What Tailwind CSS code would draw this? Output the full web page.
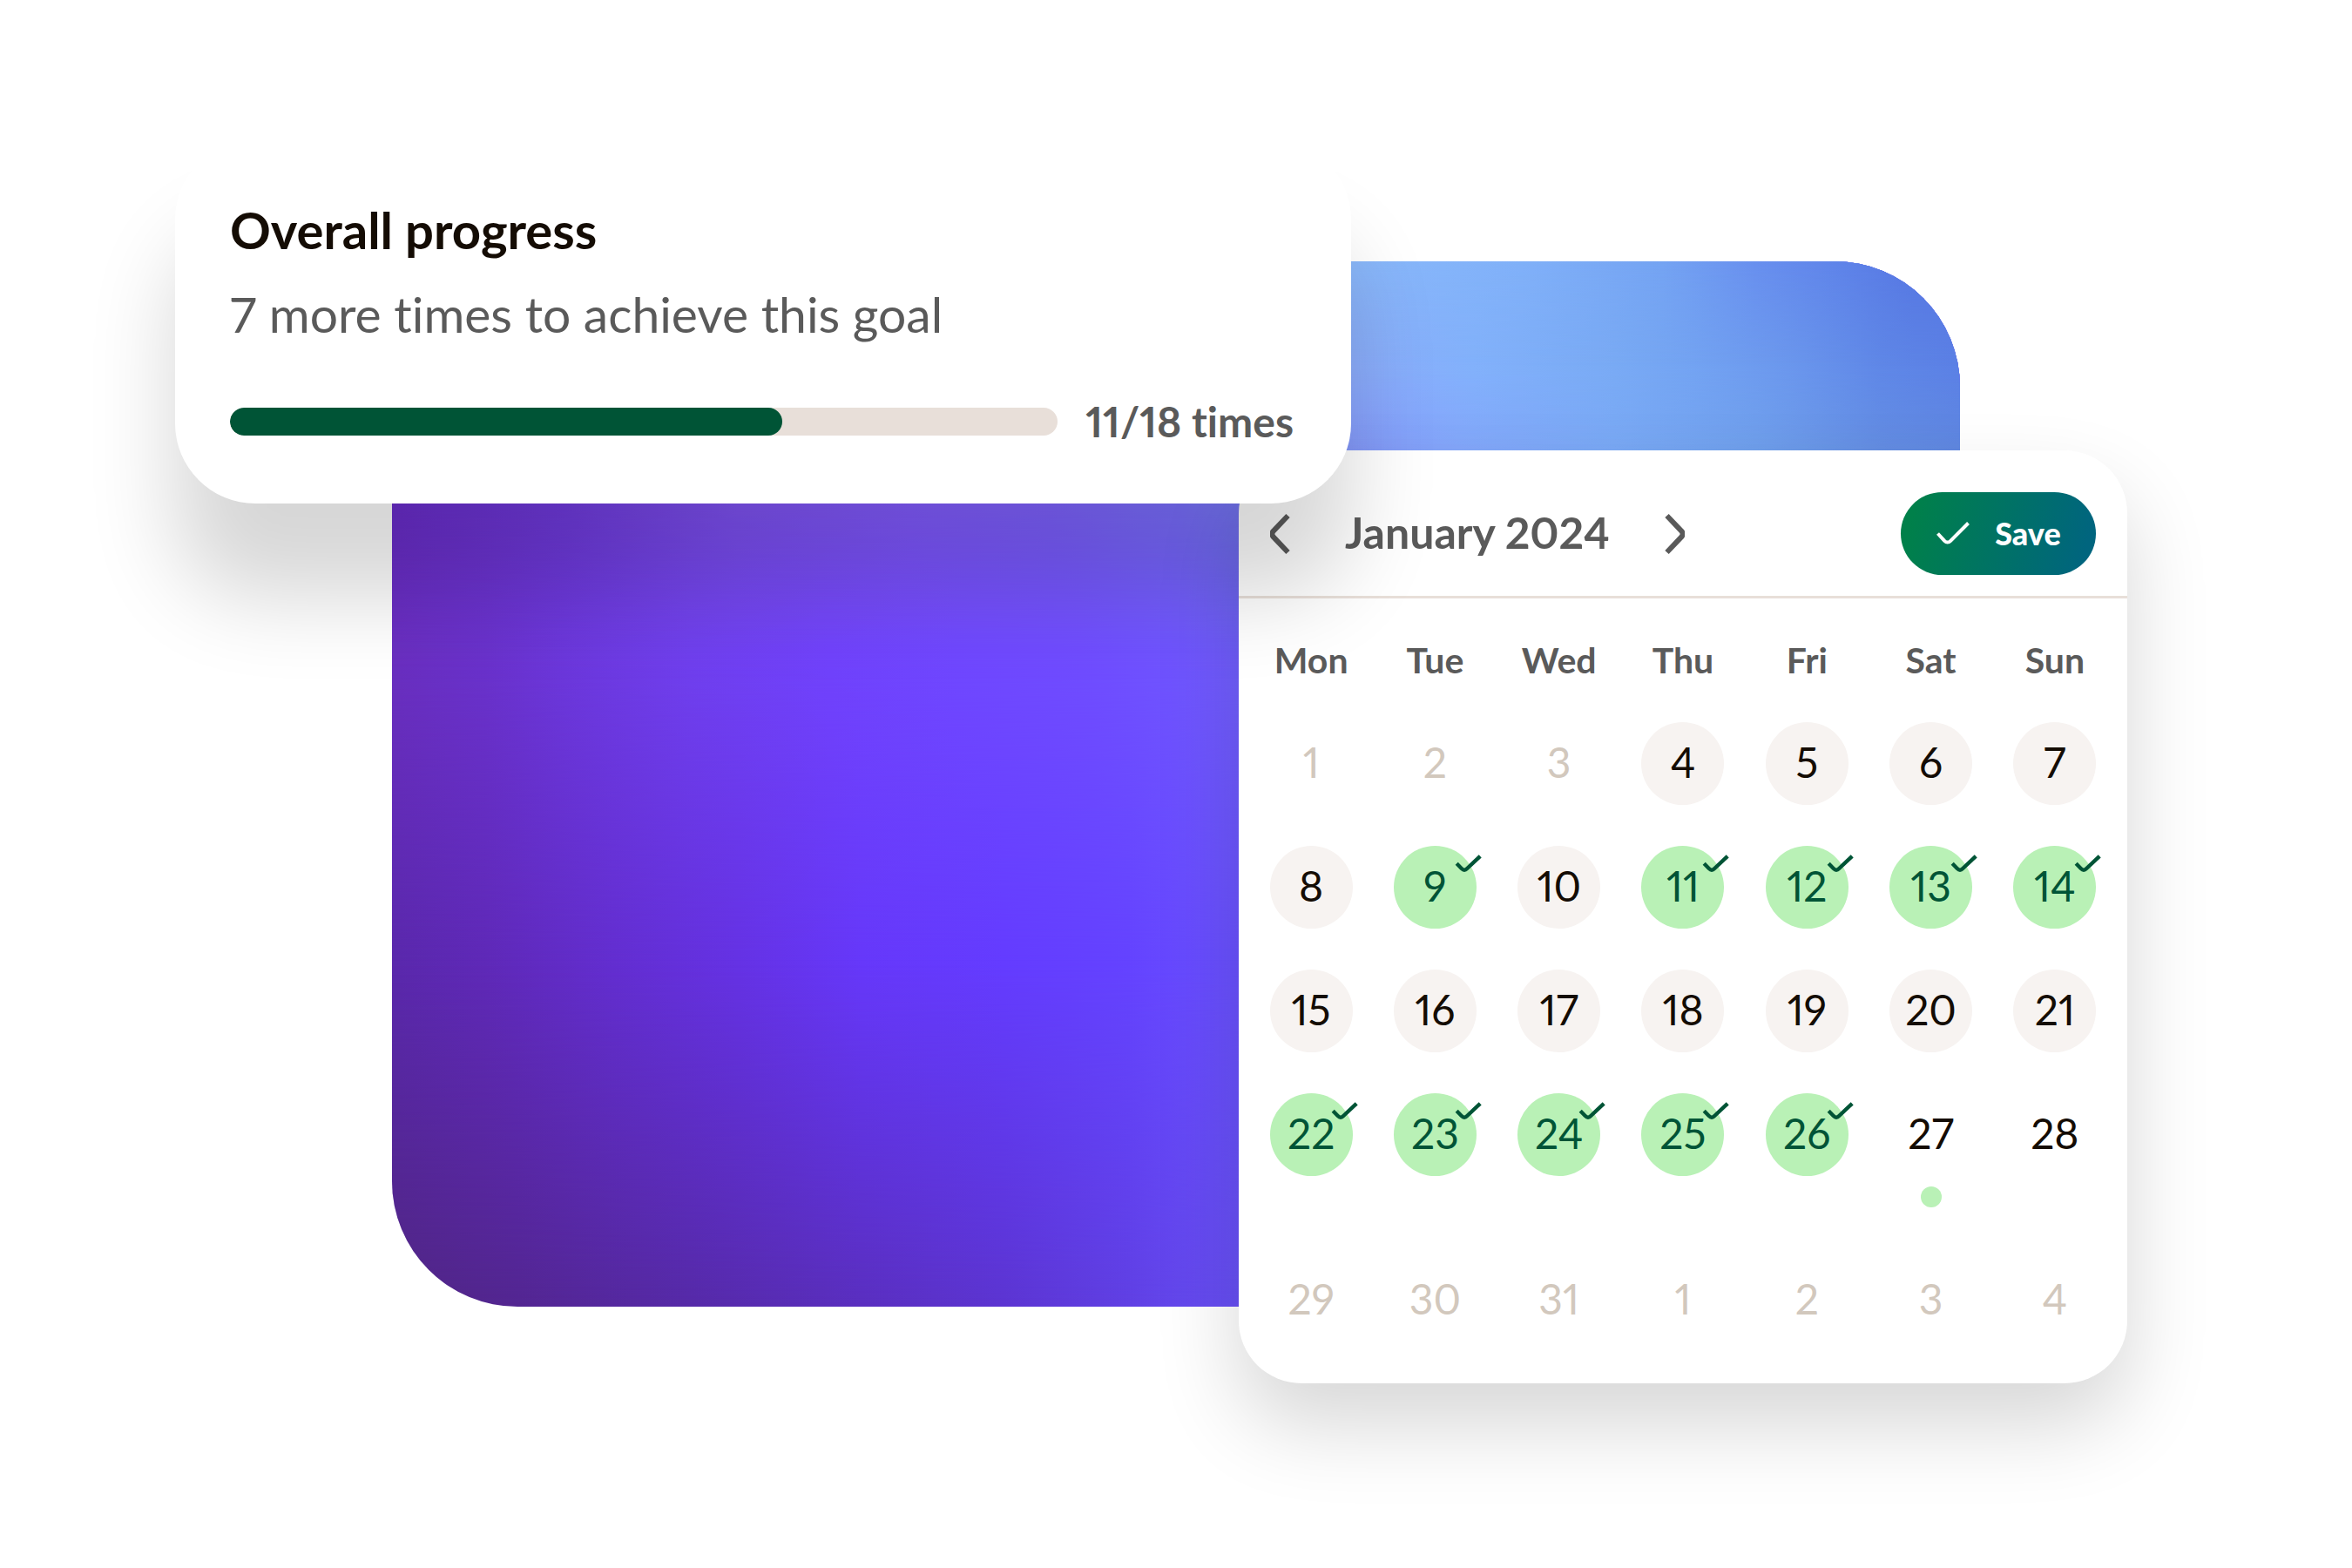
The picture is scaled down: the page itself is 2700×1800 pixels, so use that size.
<!DOCTYPE html>
<html lang="en">
<head>
<meta charset="utf-8">
<meta name="viewport" content="width=device-width, initial-scale=1">
<title>Goal progress</title>
<script src="https://cdn.jsdelivr.net/npm/@tailwindcss/browser@4"></script>
</head>
<body class="min-h-screen bg-white font-['Lato',sans-serif] text-[#140c04] proportional-nums [font-variant-ligatures:none]">
<svg class="hidden" aria-hidden="true">
  <symbol id="tick" viewBox="0 0 32 22"><path d="M2.2 10.3 L7.8 16 Q11 19.4 14.2 16 L29.2 1.8" fill="none" stroke="currentColor" stroke-width="4.4"/></symbol>
</svg>
<main class="grid grid-cols-[minmax(0,201fr)_minmax(0,249fr)_minmax(0,972fr)_minmax(0,129fr)_minmax(0,699fr)_minmax(0,192fr)_minmax(0,258fr)] items-start">

  <!-- Backdrop: horizontal colour bands, each fading into the one below it -->
  <div class="isolate col-start-3 col-end-6 row-start-1 mt-[300px] grid h-[1200px] overflow-hidden rounded-[144px] *:[grid-area:1/1]" aria-hidden="true">
    <div class="bg-[linear-gradient(90deg,#502684_0%,#532692_8%,#562aa8_19%,#5a2fc0_30%,#5c35d2_39%,#6040e4_47%,#6850f6_54%)]"></div>
    <div class="bg-[linear-gradient(90deg,#5a28ac_0%,#5f29b8_6%,#632ed0_14%,#6532e4_22%,#6638fa_30%,#643cff_39%,#6443ff_47%,#6a52ff_54%)] [mask-image:linear-gradient(#000_67%,transparent_100%)]"></div>
    <div class="bg-[linear-gradient(90deg,#6a2fc0_0%,#6a32cc_6%,#6c38dc_11%,#7040ee_19%,#7143fc_28%,#7048ff_36%,#704dff_44%,#7055ff_50%,#7260ff_54%)] [mask-image:linear-gradient(#000_37.5%,transparent_67%)]"></div>
    <div class="bg-[linear-gradient(90deg,#6b2dcf_0%,#723ce0_11%,#8256f3_22%,#8660ff_33%,#8167ff_42%,#7d75ff_50%,#7c80ff_54%,#8698ff_61%,#84a5fb_68%,#7aa9f6_78%,#70a1ec_87%,#658fe2_95%,#618ae0_100%)] [mask-image:linear-gradient(#000_21%,transparent_37.5%)]"></div>
    <div class="bg-[linear-gradient(90deg,#8cadfc_61%,#82b1fb_69%,#79aaf4_78%,#73a3f2_83%,#6b97ed_89%,#5f87e7_95%,#5b80e5_100%)] [mask-image:linear-gradient(#000_10%,transparent_20%)]"></div>
    <div class="bg-[linear-gradient(90deg,#8ab8fa_61%,#84b4f9_67%,#80b0f8_72%,#74a3f2_81%,#688fee_87%,#5f84e9_92%,#5677e2_97%)] [mask-image:linear-gradient(#000_0%,transparent_10%)]"></div>
  </div>

  <!-- Calendar -->
  <section class="isolate col-start-4 col-end-7 row-start-1 mt-[517px] rounded-[72px] bg-white shadow-[0_48px_96px_rgba(0,0,0,0.16)]" aria-label="Calendar">
    <header class="flex items-center justify-between border-b-3 border-[#e8dfd9] pt-12 pr-9 pb-6 pl-9 text-[#5a5a5a]">
      <div class="flex items-center gap-[60px]">
        <button type="button" aria-label="Previous month"><svg class="h-12 w-6" viewBox="0 0 24 48" fill="none" stroke="currentColor" stroke-width="6"><path d="M20.5 3 L3.8 20.6 Q0.8 24 3.8 27.4 L20.5 45"/></svg></button>
        <h2 class="min-w-[308px] pb-1 text-center text-[50px] leading-[56px] font-bold">January 2024</h2>
        <button type="button" aria-label="Next month"><svg class="h-12 w-6" viewBox="0 0 24 48" fill="none" stroke="currentColor" stroke-width="6"><path d="M3.5 3 L20.2 20.6 Q23.2 24 20.2 27.4 L3.5 45"/></svg></button>
      </div>
      <button type="button" class="flex h-[95px] w-[224px] items-center justify-center gap-7 rounded-full bg-[linear-gradient(105deg,#00804a_8%,#00657e_92%)] pb-0.5 text-[36px] leading-[48px] font-black text-white">
        <svg class="h-[28px] w-[40px]" viewBox="0 0 40 28" fill="none" stroke="currentColor" stroke-width="4"><path d="M2.5 14.5 L10.2 22.8 Q13.7 26.4 17.2 22.8 L37.5 2.5"/></svg>
        Save
      </button>
    </header>
    <div class="px-3 pb-12">
      <table class="w-full table-fixed border-collapse text-[48px] leading-[56px] [&_button]:relative [&_button]:mx-auto [&_button]:flex [&_button]:size-[95px] [&_button]:items-center [&_button]:justify-center [&_button]:rounded-full [&_button]:bg-[#f7f3f1] [&_button]:pb-1 [&_button:disabled]:bg-transparent [&_button:disabled]:text-[#d2c8bd] [&_button[aria-pressed]]:bg-[#b9f1b6] [&_button[aria-pressed]]:text-[#005436] [&_svg]:absolute [&_svg]:top-2.5 [&_svg]:left-[70px] [&_svg]:h-[22px] [&_svg]:w-8 [&_td]:p-0 [&_td]:pt-6 [&_td]:align-top">
        <thead class="text-[41px] leading-[48px] text-[#5a5a5a] [&_th]:p-0 [&_th]:pt-[47px] [&_th]:pb-[23px] [&_th]:font-bold">
          <tr><th scope="col">Mon</th><th scope="col">Tue</th><th scope="col">Wed</th><th scope="col">Thu</th><th scope="col">Fri</th><th scope="col">Sat</th><th scope="col">Sun</th></tr>
        </thead>
        <tbody>
          <tr class="h-[142px]">
            <td><button type="button" disabled>1</button></td>
            <td><button type="button" disabled>2</button></td>
            <td><button type="button" disabled>3</button></td>
            <td><button type="button">4</button></td>
            <td><button type="button">5</button></td>
            <td><button type="button">6</button></td>
            <td><button type="button">7</button></td>
          </tr>
          <tr class="h-[142px]">
            <td><button type="button">8</button></td>
            <td><button type="button" aria-pressed="true">9<svg aria-hidden="true"><use href="#tick"/></svg></button></td>
            <td><button type="button">10</button></td>
            <td><button type="button" aria-pressed="true">11<svg aria-hidden="true"><use href="#tick"/></svg></button></td>
            <td><button type="button" aria-pressed="true">12<svg aria-hidden="true"><use href="#tick"/></svg></button></td>
            <td><button type="button" aria-pressed="true">13<svg aria-hidden="true"><use href="#tick"/></svg></button></td>
            <td><button type="button" aria-pressed="true">14<svg aria-hidden="true"><use href="#tick"/></svg></button></td>
          </tr>
          <tr class="h-[142px]">
            <td><button type="button">15</button></td>
            <td><button type="button">16</button></td>
            <td><button type="button">17</button></td>
            <td><button type="button">18</button></td>
            <td><button type="button">19</button></td>
            <td><button type="button">20</button></td>
            <td><button type="button">21</button></td>
          </tr>
          <tr class="h-[190px]">
            <td><button type="button" aria-pressed="true">22<svg aria-hidden="true"><use href="#tick"/></svg></button></td>
            <td><button type="button" aria-pressed="true">23<svg aria-hidden="true"><use href="#tick"/></svg></button></td>
            <td><button type="button" aria-pressed="true">24<svg aria-hidden="true"><use href="#tick"/></svg></button></td>
            <td><button type="button" aria-pressed="true">25<svg aria-hidden="true"><use href="#tick"/></svg></button></td>
            <td><button type="button" aria-pressed="true">26<svg aria-hidden="true"><use href="#tick"/></svg></button></td>
            <td><button type="button" class="bg-transparent!" aria-current="date">27</button><span class="mx-auto mt-3 block size-6 rounded-full bg-[#b9f1b6]"></span></td>
            <td><button type="button" class="bg-transparent!">28</button></td>
          </tr>
          <tr>
            <td><button type="button" disabled>29</button></td>
            <td><button type="button" disabled>30</button></td>
            <td><button type="button" disabled>31</button></td>
            <td><button type="button" disabled>1</button></td>
            <td><button type="button" disabled>2</button></td>
            <td><button type="button" disabled>3</button></td>
            <td><button type="button" disabled>4</button></td>
          </tr>
        </tbody>
      </table>
    </div>
  </section>

  <!-- Progress -->
  <section class="isolate col-start-2 col-end-5 row-start-1 mt-40 rounded-[92px] bg-white pt-[68px] pr-[66px] pb-[66px] pl-[63px] shadow-[0_108px_100px_rgba(0,0,0,0.16)]">
    <h1 class="text-[58px] leading-[72px] font-bold" id="progress-title">Overall progress</h1>
    <p class="mt-6 text-[57px] leading-[72px] text-[#5a5a5a]">7 more times to achieve this goal</p>
    <div class="mt-[60px] flex items-center gap-8">
      <div class="h-8 flex-1 overflow-hidden rounded-full bg-[#e8dfd9]" role="progressbar" aria-labelledby="progress-title" aria-valuemin="0" aria-valuemax="18" aria-valuenow="11">
        <div class="h-full w-2/3 rounded-full bg-[#005436]"></div>
      </div>
      <span class="text-[48px] leading-[56px] font-bold text-[#5a5a5a]">11/18 times</span>
    </div>
  </section>
</main>
</body>
</html>
